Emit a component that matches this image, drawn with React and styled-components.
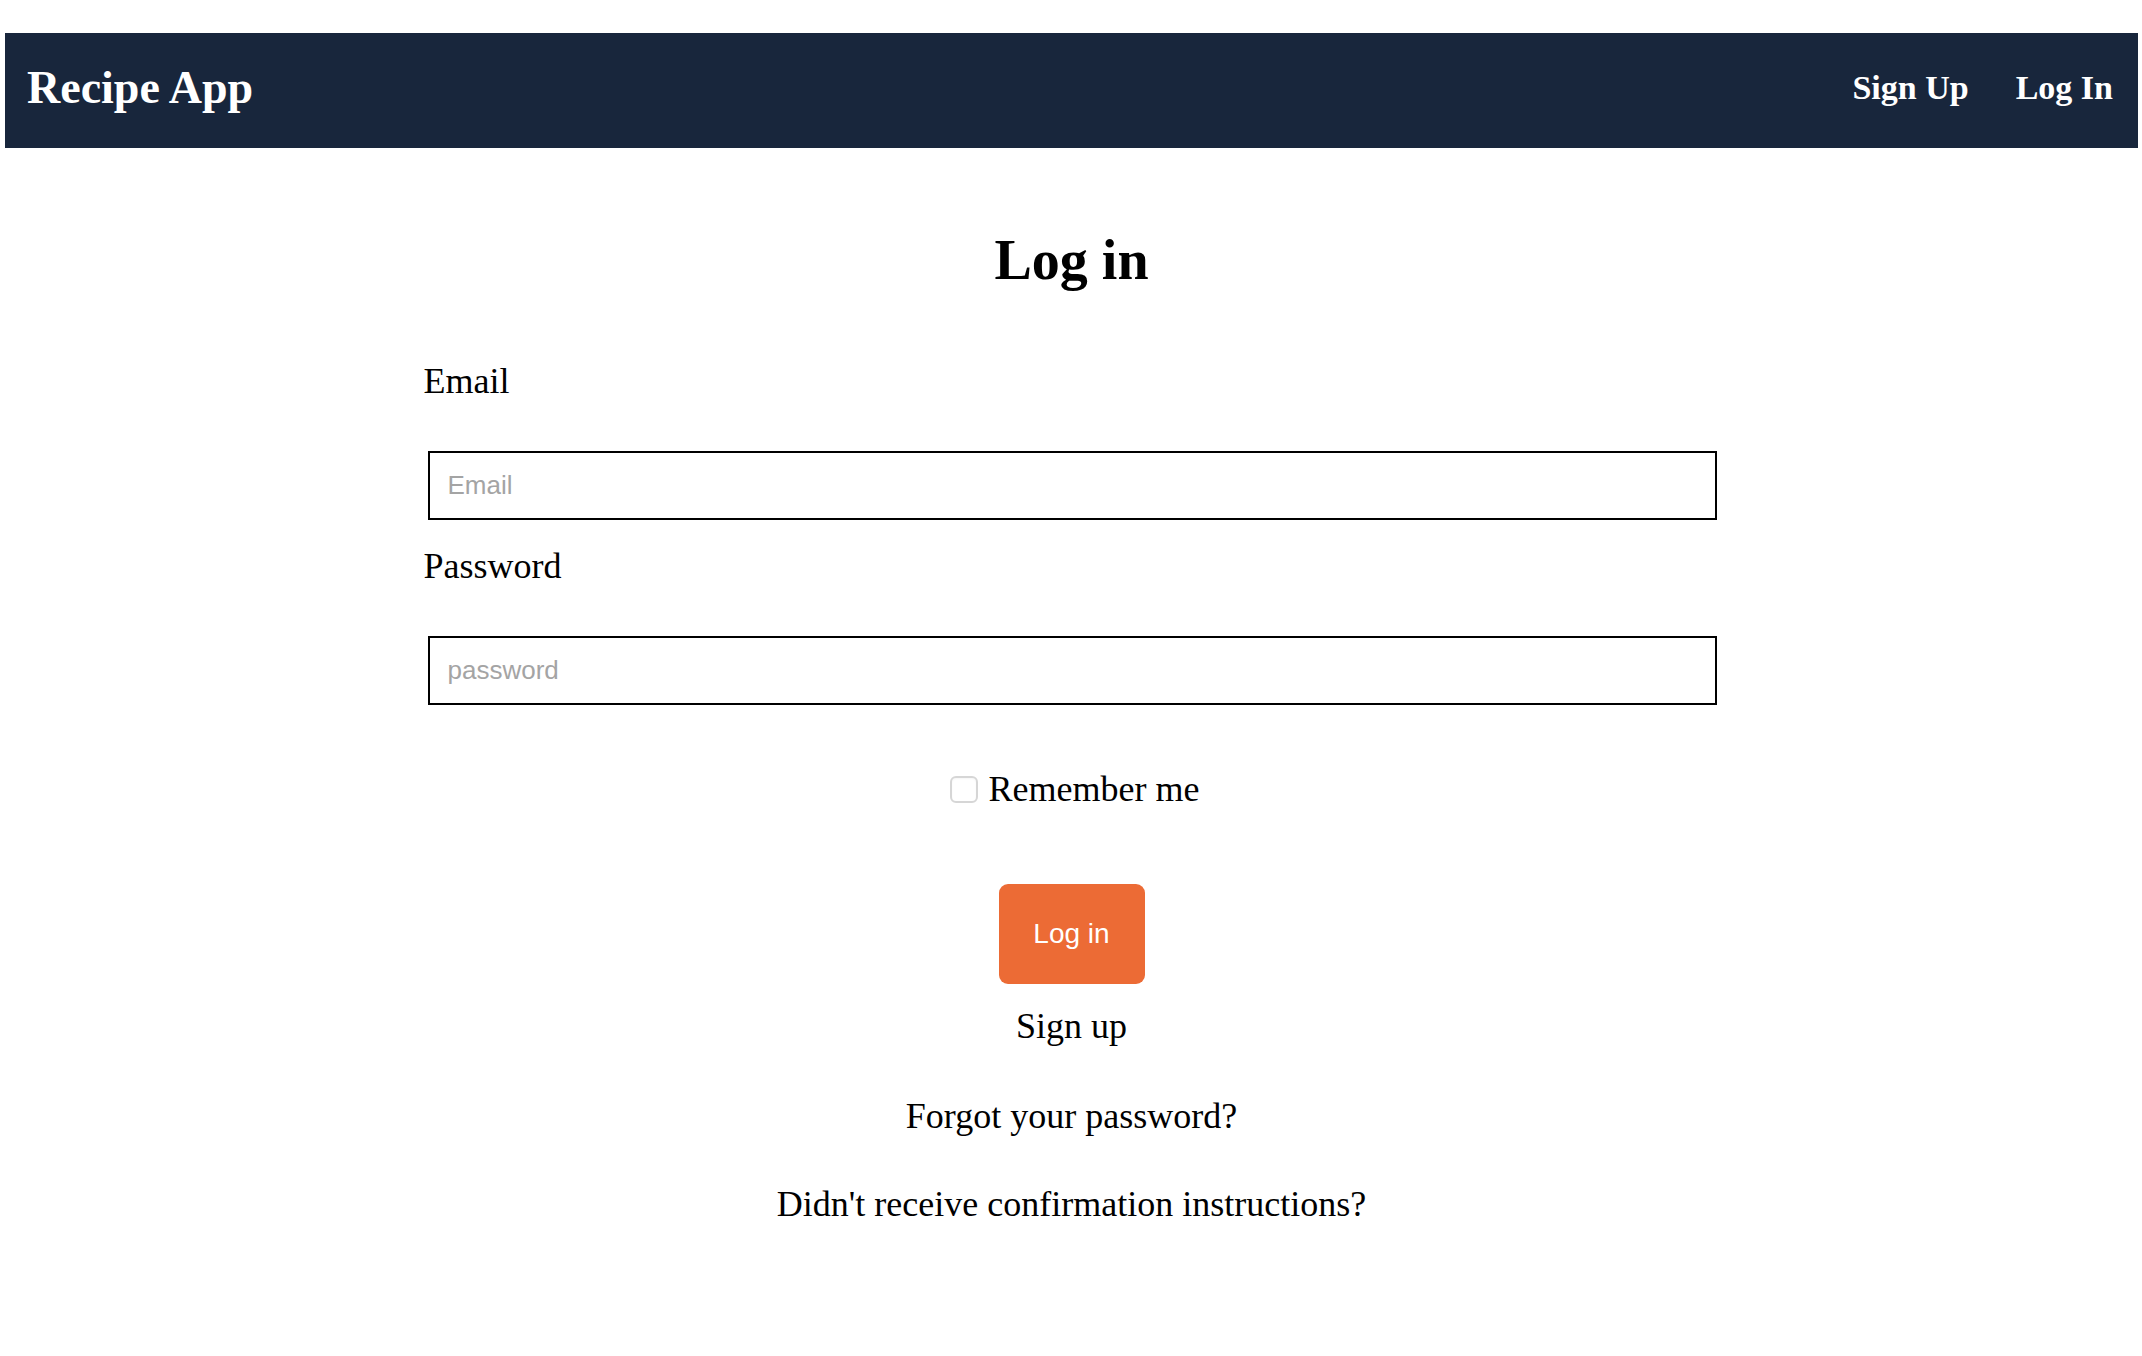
import React from "react";
import styled, { createGlobalStyle } from "styled-components";

const GlobalStyle = createGlobalStyle`
  body {
    margin: 0;
    background: #ffffff;
    font-family: "Liberation Serif", "Times New Roman", serif;
    color: #000000;
  }
`;

const App = () => {
  return (
    <Page>
      <GlobalStyle />
      <Navbar>
        <Brand href="#">Recipe App</Brand>
        <NavLinks>
          <NavLink href="#">Sign Up</NavLink>
          <NavLink href="#">Log In</NavLink>
        </NavLinks>
      </Navbar>
      <Main>
        <Title>Log in</Title>
        <Form onSubmit={(e) => e.preventDefault()}>
          <Label htmlFor="email">Email</Label>
          <Input id="email" type="email" placeholder="Email" />
          <Label htmlFor="password" $top={28}>
            Password
          </Label>
          <Input id="password" type="password" placeholder="password" />
          <RememberRow>
            <Checkbox id="remember" type="checkbox" />
            <RememberLabel htmlFor="remember">Remember me</RememberLabel>
          </RememberRow>
          <SubmitButton type="submit">Log in</SubmitButton>
        </Form>
        <Links>
          <TextLink href="#" $top={24}>
            Sign up
          </TextLink>
          <TextLink href="#" $top={54}>
            Forgot your password?
          </TextLink>
          <TextLink href="#" $top={52}>
            Didn't receive confirmation instructions?
          </TextLink>
        </Links>
      </Main>
    </Page>
  );
};

const Page = styled.div`
  padding: 33px 4px 0 5px;
  min-height: 1356px;
  box-sizing: border-box;
`;

const Navbar = styled.nav`
  height: 115px;
  box-sizing: border-box;
  background: #18263c;
  display: flex;
  align-items: center;
  justify-content: space-between;
  padding: 0 25px 5px 22px;
`;

const Brand = styled.a`
  font-size: 46px;
  line-height: 46px;
  font-weight: 700;
  color: #ffffff;
  text-decoration: none;
`;

const NavLinks = styled.div`
  display: flex;
  gap: 47px;
`;

const NavLink = styled.a`
  font-size: 34px;
  line-height: 34px;
  font-weight: 700;
  color: #ffffff;
  text-decoration: none;
`;

const Main = styled.main`
  display: flex;
  flex-direction: column;
  align-items: center;
`;

const Title = styled.h1`
  margin: 84px 0 0;
  font-size: 56px;
  line-height: 57px;
  font-weight: 700;
`;

const Form = styled.form`
  width: 1296px;
  margin-top: 74px;
  display: flex;
  flex-direction: column;
`;

const Label = styled.label`
  display: block;
  font-size: 36px;
  line-height: 36px;
  margin-top: ${(p) => p.$top || 0}px;
  margin-bottom: 52px;
`;

const Input = styled.input`
  box-sizing: border-box;
  width: 1289px;
  height: 69px;
  margin: 0 0 0 4px;
  padding: 0 18px;
  border: 2px solid #000000;
  border-radius: 0;
  font-family: "Liberation Sans", Arial, sans-serif;
  font-size: 26px;
  outline: none;

  &::placeholder {
    color: #a4a4a4;
  }
`;

const RememberRow = styled.div`
  display: flex;
  align-items: center;
  justify-content: center;
  gap: 11px;
  margin-top: 66px;
  padding-left: 6px;
  height: 36px;
`;

const Checkbox = styled.input`
  appearance: none;
  box-sizing: border-box;
  width: 28px;
  height: 27px;
  margin: 0;
  border: 2px solid #d6d6d6;
  border-radius: 6px;
  background: #ffffff;
  box-shadow: inset 0 1px 2px rgba(0, 0, 0, 0.04);
`;

const RememberLabel = styled.label`
  font-size: 36px;
  line-height: 36px;
`;

const SubmitButton = styled.button`
  align-self: center;
  margin: 77px 0 0;
  width: 146px;
  height: 100px;
  border: none;
  border-radius: 9px;
  background: #ec6b35;
  color: #ffffff;
  font-family: "Liberation Sans", Arial, sans-serif;
  font-size: 28px;
  cursor: pointer;
`;

const Links = styled.div`
  display: flex;
  flex-direction: column;
  align-items: center;
`;

const TextLink = styled.a`
  margin-top: ${(p) => p.$top}px;
  font-size: 36px;
  line-height: 36px;
  color: #000000;
  text-decoration: none;
`;

export default App;
